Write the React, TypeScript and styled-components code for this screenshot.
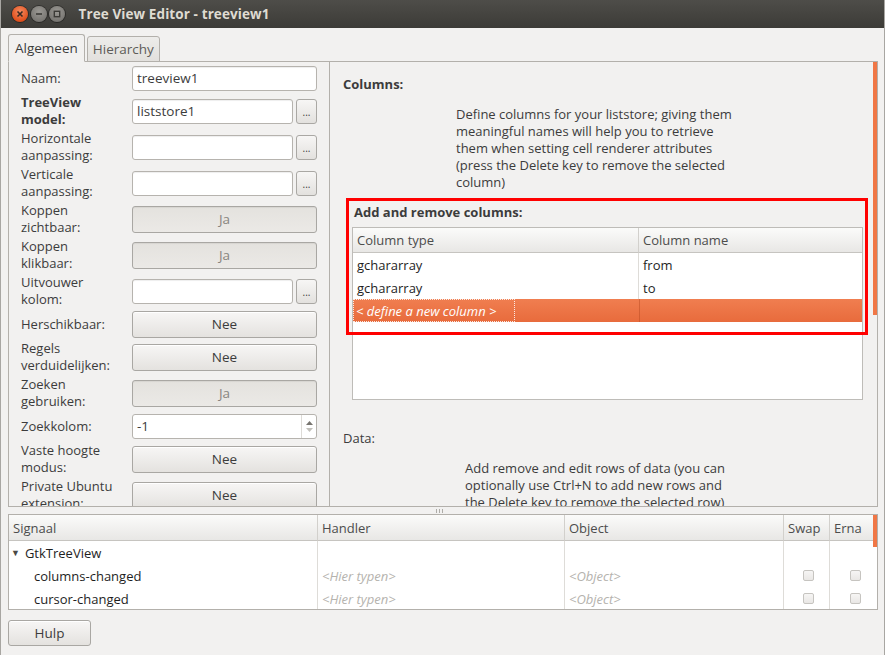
import React from 'react';
import styled, { createGlobalStyle } from 'styled-components';

const GlobalStyle = createGlobalStyle`
  html, body {
    margin: 0;
    padding: 0;
    background: #f2f1f0;
  }
  body {
    font-family: 'Open Sans', 'Noto Sans', sans-serif;
    font-size: 13px;
    color: #3c3c3c;
  }
  * {
    box-sizing: border-box;
  }
`;

const StyledWindow = styled.div`
  width: 885px;
  height: 655px;
  background: #f2f1f0;
  border-left: 1px solid #a8a6a2;
  border-right: 1px solid #a8a6a2;
  display: flex;
  flex-direction: column;
  overflow: hidden;
`;

const StyledTitleBar = styled.div`
  height: 28px;
  flex-shrink: 0;
  background: linear-gradient(#4e4d49, #3c3b37);
  display: flex;
  align-items: center;
  padding-left: 11px;
`;

const StyledWindowButton = styled.div<{ $close?: boolean }>`
  width: 16px;
  height: 16px;
  border-radius: 50%;
  margin-right: 2.5px;
  display: flex;
  align-items: center;
  justify-content: center;
  background: ${(p) =>
    p.$close
      ? 'radial-gradient(circle at 50% 35%, #f58c62, #e0501d 70%, #b83d12)'
      : 'radial-gradient(circle at 50% 35%, #9a9893, #7a7874 70%, #5c5b57)'};
  box-shadow: 0 0 0 1px rgba(0, 0, 0, 0.35);
`;

const StyledTitle = styled.div`
  margin-left: 11px;
  font-weight: 700;
  font-size: 13.5px;
  color: #dfdbd2;
  letter-spacing: 0.1px;
`;

const StyledBody = styled.div`
  flex: 1;
  display: flex;
  flex-direction: column;
  padding: 6px 6px 0 7px;
`;

const StyledTabRow = styled.div`
  display: flex;
  align-items: flex-end;
  height: 28px;
  position: relative;
  z-index: 1;
`;

const StyledTab = styled.div<{ $active?: boolean }>`
  height: ${(p) => (p.$active ? '28px' : '26px')};
  padding: 0 ${(p) => (p.$active ? '6px' : '5px')};
  margin-right: 2px;
  display: flex;
  align-items: center;
  border: 1px solid #b3b0ab;
  border-bottom: ${(p) => (p.$active ? '1px solid #f2f1f0' : '1px solid #b3b0ab')};
  border-radius: 3px 3px 0 0;
  background: ${(p) => (p.$active ? '#f2f1f0' : 'linear-gradient(#edecea, #e2e0dd)')};
  color: ${(p) => (p.$active ? '#3c3c3c' : '#5e5c58')};
  font-size: 13.5px;
`;

const StyledNotebookPage = styled.div`
  margin-top: -1px;
  width: 870px;
  height: 446px;
  border: 1px solid #b3b0ab;
  display: flex;
  overflow: hidden;
`;

const StyledLeftPanel = styled.div`
  width: 321px;
  flex-shrink: 0;
  border-right: 1px solid #b3b0ab;
  padding: 2px 12px 0 12px;
  display: flex;
  flex-direction: column;
  gap: 2px;
  overflow: hidden;
`;

const StyledFieldRow = styled.div`
  display: grid;
  grid-template-columns: 111px 185px;
  align-items: center;
  min-height: 28px;
  flex-shrink: 0;
`;

const StyledFieldLabel = styled.div<{ $bold?: boolean }>`
  white-space: pre-line;
  line-height: 17px;
  font-weight: ${(p) => (p.$bold ? 700 : 400)};
  color: #3c3c3c;
`;

const StyledControl = styled.div`
  display: flex;
  gap: 3px;
`;

const StyledEntry = styled.div`
  flex: 1;
  height: 25px;
  background: #fff;
  border: 1px solid #b6b3ae;
  border-radius: 3px;
  box-shadow: inset 0 1px 1px rgba(0, 0, 0, 0.07);
  display: flex;
  align-items: center;
  padding-left: 4px;
  color: #3c3c3c;
  font-size: 13.5px;
`;

const StyledDotsButton = styled.div`
  width: 21px;
  height: 25px;
  border: 1px solid #aaa8a4;
  border-radius: 3px;
  background: linear-gradient(#f7f6f5, #e3e1de);
  display: flex;
  align-items: flex-end;
  justify-content: center;
  padding-bottom: 6px;
  font-size: 10px;
  line-height: 10px;
  color: #3c3c3c;
`;

const StyledToggle = styled.div<{ $active?: boolean }>`
  flex: 1;
  height: 27px;
  border: 1px solid #a9a7a3;
  border-radius: 3px;
  background: ${(p) =>
    p.$active ? 'linear-gradient(#e4e2de, #ebe9e6)' : 'linear-gradient(#f7f6f5, #e4e2df)'};
  box-shadow: ${(p) => (p.$active ? 'inset 0 1px 1px rgba(0,0,0,0.06)' : 'inset 0 1px 0 #fff')};
  display: flex;
  align-items: center;
  justify-content: center;
  color: ${(p) => (p.$active ? '#88857f' : '#3c3c3c')};
  font-size: 13.5px;
`;

const StyledSpin = styled.div`
  flex: 1;
  height: 25px;
  background: #fff;
  border: 1px solid #b6b3ae;
  border-radius: 3px;
  display: flex;
  align-items: stretch;
  font-size: 13.5px;
`;

const StyledSpinValue = styled.div`
  flex: 1;
  display: flex;
  align-items: center;
  padding-left: 4px;
`;

const StyledSpinArrows = styled.div`
  width: 15px;
  border-left: 1px solid #dddbd7;
  display: flex;
  flex-direction: column;
  align-items: center;
  justify-content: center;
  gap: 3px;
`;

const StyledRightPanel = styled.div`
  flex: 1;
  position: relative;
  padding: 14px 0 0 13px;
  overflow: hidden;
`;

const StyledSectionTitle = styled.div<{ $bold?: boolean }>`
  line-height: 17px;
  font-weight: ${(p) => (p.$bold ? 700 : 400)};
  color: #3c3c3c;
`;

const StyledDescription = styled.div<{ $indent: number }>`
  margin: 13px 0 0 ${(p) => p.$indent}px;
  line-height: 17px;
  color: #3c3c3c;
  white-space: nowrap;
`;

const StyledColumnsSection = styled.div`
  position: relative;
  margin: 13px 0 0 9px;
  width: 511px;
`;

const StyledHighlight = styled.div`
  position: absolute;
  top: -6px;
  left: -6px;
  width: 522px;
  height: 137px;
  border: 3px solid #ff0000;
  pointer-events: none;
`;

const StyledTable = styled.div<{ $height: number }>`
  margin-top: 6px;
  height: ${(p) => p.$height}px;
  background: #fff;
  border: 1px solid #bebcb8;
  overflow: hidden;
`;

const StyledGridRow = styled.div<{ $cols: string; $height: number }>`
  display: grid;
  grid-template-columns: ${(p) => p.$cols};
  height: ${(p) => p.$height}px;
`;

const StyledHeaderCell = styled.div<{ $last?: boolean }>`
  display: flex;
  align-items: center;
  padding-left: 4px;
  background: linear-gradient(#fbfbfa, #e8e7e5);
  border-bottom: 1px solid #c6c4c0;
  border-right: ${(p) => (p.$last ? 'none' : '1px solid #d2d0cc')};
  color: #4c4c4c;
  white-space: nowrap;
  overflow: hidden;
`;

const StyledCell = styled.div<{ $line?: boolean; $muted?: boolean; $indent?: number }>`
  display: flex;
  align-items: center;
  padding-left: ${(p) => p.$indent ?? 4}px;
  border-right: ${(p) => (p.$line ? '1px solid #dedcd8' : 'none')};
  color: ${(p) => (p.$muted ? '#b5b3ae' : '#1e1e1e')};
  font-style: ${(p) => (p.$muted ? 'italic' : 'normal')};
  white-space: nowrap;
  overflow: hidden;
`;

const StyledSelectedRow = styled.div`
  display: grid;
  grid-template-columns: 286px 1fr;
  height: 23px;
  background: linear-gradient(#f07e50, #e86b3c);
`;

const StyledFocusCell = styled.div`
  display: flex;
  align-items: center;
  padding: 0 3px 0 2px;
  width: 162px;
  border: 1px dotted rgba(255, 255, 255, 0.85);
  color: #fff;
  font-style: italic;
  white-space: nowrap;
`;

const StyledSelectedFill = styled.div`
  border-left: 1px solid rgba(180, 70, 30, 0.45);
`;

const StyledScrollIndicator = styled.div<{ $top: number; $height: number }>`
  position: absolute;
  right: 0;
  top: ${(p) => p.$top}px;
  width: 4px;
  height: ${(p) => p.$height}px;
  background: #f07746;
`;

const StyledPaneHandle = styled.div`
  height: 7px;
  display: flex;
  justify-content: flex-start;
  align-items: center;
  padding-left: 428px;
  gap: 2px;
`;

const StyledGripDot = styled.div`
  width: 1px;
  height: 4px;
  background: #aeaca8;
`;

const StyledSignalTable = styled.div`
  position: relative;
  width: 870px;
  height: 96px;
  background: #fff;
  border: 1px solid #b3b0ab;
  overflow: hidden;
`;

const StyledExpander = styled.span`
  font-size: 9px;
  color: #4a4945;
  margin-right: 5px;
`;

const StyledCheckbox = styled.div`
  width: 11px;
  height: 11px;
  border: 1px solid #c6c4c0;
  border-radius: 2px;
  background: linear-gradient(#f6f5f4, #e9e7e5);
  margin: 0 auto;
`;

const StyledFooter = styled.div`
  padding-top: 10px;
`;

const StyledHelpButton = styled.div`
  width: 83px;
  height: 26px;
  border: 1px solid #a9a7a3;
  border-radius: 3px;
  background: linear-gradient(#f7f6f5, #e4e2df);
  box-shadow: inset 0 1px 0 #fff;
  display: flex;
  align-items: center;
  justify-content: center;
  color: #3c3c3c;
  font-size: 13.5px;
`;

type Field = {
  label: string;
  bold?: boolean;
  kind: 'entry' | 'entryButton' | 'toggle' | 'spin';
  value?: string;
  active?: boolean;
};

const fields: Field[] = [
  { label: 'Naam:', kind: 'entry', value: 'treeview1' },
  { label: 'TreeView\nmodel:', bold: true, kind: 'entryButton', value: 'liststore1' },
  { label: 'Horizontale\naanpassing:', kind: 'entryButton' },
  { label: 'Verticale\naanpassing:', kind: 'entryButton' },
  { label: 'Koppen\nzichtbaar:', kind: 'toggle', value: 'Ja', active: true },
  { label: 'Koppen\nklikbaar:', kind: 'toggle', value: 'Ja', active: true },
  { label: 'Uitvouwer\nkolom:', kind: 'entryButton' },
  { label: 'Herschikbaar:', kind: 'toggle', value: 'Nee' },
  { label: 'Regels\nverduidelijken:', kind: 'toggle', value: 'Nee' },
  { label: 'Zoeken\ngebruiken:', kind: 'toggle', value: 'Ja', active: true },
  { label: 'Zoekkolom:', kind: 'spin', value: '-1' },
  { label: 'Vaste hoogte\nmodus:', kind: 'toggle', value: 'Nee' },
  { label: 'Private Ubuntu\nextension:', kind: 'toggle', value: 'Nee' },
];

const columnsHelp = [
  'Define columns for your liststore; giving them',
  'meaningful names will help you to retrieve',
  'them when setting cell renderer attributes',
  '(press the Delete key to remove the selected',
  'column)',
];

const dataHelp = [
  'Add remove and edit rows of data (you can',
  'optionally use Ctrl+N to add new rows and',
  'the Delete key to remove the selected row)',
];

const columns = [
  { type: 'gchararray', name: 'from' },
  { type: 'gchararray', name: 'to' },
];

const signals = ['columns-changed', 'cursor-changed'];

const SIGNAL_COLS = '309px 247px 219px 46px 1fr';

const WindowControls = () => (
  <>
    <StyledWindowButton $close>
      <svg width="8" height="8" viewBox="0 0 8 8">
        <path d="M1.5 1.5 L6.5 6.5 M6.5 1.5 L1.5 6.5" stroke="#3a2a22" strokeWidth="1.6" />
      </svg>
    </StyledWindowButton>
    <StyledWindowButton>
      <svg width="8" height="8" viewBox="0 0 8 8">
        <path d="M1 4 H7" stroke="#3c3b37" strokeWidth="1.6" />
      </svg>
    </StyledWindowButton>
    <StyledWindowButton>
      <svg width="8" height="8" viewBox="0 0 8 8">
        <rect x="1.3" y="1.3" width="5.4" height="5.4" fill="none" stroke="#3c3b37" strokeWidth="1.4" />
      </svg>
    </StyledWindowButton>
  </>
);

const FieldControl = ({ field }: { field: Field }) => {
  if (field.kind === 'toggle') {
    return <StyledToggle $active={field.active}>{field.value}</StyledToggle>;
  }
  if (field.kind === 'spin') {
    return (
      <StyledSpin>
        <StyledSpinValue>{field.value}</StyledSpinValue>
        <StyledSpinArrows>
          <svg width="7" height="4" viewBox="0 0 7 4">
            <path d="M0 4 L3.5 0 L7 4 Z" fill="#77746f" />
          </svg>
          <svg width="7" height="4" viewBox="0 0 7 4">
            <path d="M0 0 L3.5 4 L7 0 Z" fill="#c2c0bb" />
          </svg>
        </StyledSpinArrows>
      </StyledSpin>
    );
  }
  return (
    <StyledControl>
      <StyledEntry>{field.value}</StyledEntry>
      {field.kind === 'entryButton' && <StyledDotsButton>...</StyledDotsButton>}
    </StyledControl>
  );
};

const App = () => {
  return (
    <>
      <GlobalStyle />
      <StyledWindow>
        <StyledTitleBar>
          <WindowControls />
          <StyledTitle>Tree View Editor - treeview1</StyledTitle>
        </StyledTitleBar>

        <StyledBody>
          <StyledTabRow>
            <StyledTab $active>Algemeen</StyledTab>
            <StyledTab>Hierarchy</StyledTab>
          </StyledTabRow>

          <StyledNotebookPage>
            <StyledLeftPanel>
              {fields.map((field) => (
                <StyledFieldRow key={field.label}>
                  <StyledFieldLabel $bold={field.bold}>{field.label}</StyledFieldLabel>
                  <FieldControl field={field} />
                </StyledFieldRow>
              ))}
            </StyledLeftPanel>

            <StyledRightPanel>
              <StyledSectionTitle $bold>Columns:</StyledSectionTitle>
              <StyledDescription $indent={113}>
                {columnsHelp.map((line) => (
                  <div key={line}>{line}</div>
                ))}
              </StyledDescription>

              <StyledColumnsSection>
                <StyledSectionTitle $bold style={{ paddingLeft: 2 }}>
                  Add and remove columns:
                </StyledSectionTitle>
                <StyledTable $height={173}>
                  <StyledGridRow $cols="286px 1fr" $height={25}>
                    <StyledHeaderCell>Column type</StyledHeaderCell>
                    <StyledHeaderCell $last>Column name</StyledHeaderCell>
                  </StyledGridRow>
                  {columns.map((col) => (
                    <StyledGridRow key={col.name} $cols="286px 1fr" $height={23}>
                      <StyledCell $line>{col.type}</StyledCell>
                      <StyledCell>{col.name}</StyledCell>
                    </StyledGridRow>
                  ))}
                  <StyledSelectedRow>
                    <StyledFocusCell>&lt; define a new column &gt;</StyledFocusCell>
                    <StyledSelectedFill />
                  </StyledSelectedRow>
                </StyledTable>
                <StyledHighlight />
              </StyledColumnsSection>

              <StyledSectionTitle style={{ marginTop: 30 }}>Data:</StyledSectionTitle>
              <StyledDescription $indent={122}>
                {dataHelp.map((line) => (
                  <div key={line}>{line}</div>
                ))}
              </StyledDescription>

              <StyledScrollIndicator $top={0} $height={253} />
            </StyledRightPanel>
          </StyledNotebookPage>

          <StyledPaneHandle>
            <StyledGripDot />
            <StyledGripDot />
            <StyledGripDot />
          </StyledPaneHandle>

          <StyledSignalTable>
            <StyledGridRow $cols={SIGNAL_COLS} $height={26}>
              <StyledHeaderCell>Signaal</StyledHeaderCell>
              <StyledHeaderCell>Handler</StyledHeaderCell>
              <StyledHeaderCell>Object</StyledHeaderCell>
              <StyledHeaderCell>Swap</StyledHeaderCell>
              <StyledHeaderCell $last>Erna</StyledHeaderCell>
            </StyledGridRow>
            <StyledGridRow $cols={SIGNAL_COLS} $height={23}>
              <StyledCell $line $indent={2}>
                <StyledExpander>▼</StyledExpander>
                GtkTreeView
              </StyledCell>
              <StyledCell $line />
              <StyledCell $line />
              <StyledCell $line />
              <StyledCell />
            </StyledGridRow>
            {signals.map((name) => (
              <StyledGridRow key={name} $cols={SIGNAL_COLS} $height={23}>
                <StyledCell $line $indent={25}>
                  {name}
                </StyledCell>
                <StyledCell $line $muted>
                  &lt;Hier typen&gt;
                </StyledCell>
                <StyledCell $line $muted>
                  &lt;Object&gt;
                </StyledCell>
                <StyledCell $line>
                  <StyledCheckbox />
                </StyledCell>
                <StyledCell>
                  <StyledCheckbox />
                </StyledCell>
              </StyledGridRow>
            ))}
            <StyledScrollIndicator $top={0} $height={32} />
          </StyledSignalTable>

          <StyledFooter>
            <StyledHelpButton>Hulp</StyledHelpButton>
          </StyledFooter>
        </StyledBody>
      </StyledWindow>
    </>
  );
};

export default App;
